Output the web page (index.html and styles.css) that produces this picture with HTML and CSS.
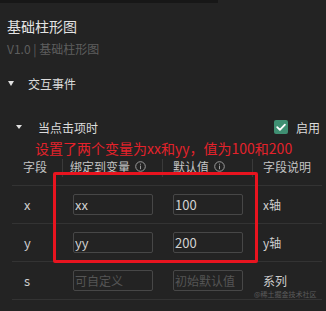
FILE: index.html
```html
<!DOCTYPE html>
<html>
<head>
<meta charset="utf-8">
<link rel="stylesheet" href="styles.css">
</head>
<body>
<div class="topbar"></div>
<div class="panel">
  <div class="title">基础柱形图</div>
  <div class="version">V1.0 | 基础柱形图</div>
  <div class="section"><span class="caret"></span><span class="section-label">交互事件</span></div>
  <div class="event-row">
    <span class="caret caret-sm"></span>
    <span class="event-label">当点击项时</span>
    <span class="spacer"></span>
    <span class="checkbox"><svg width="14" height="14" viewBox="0 0 14 14"><path d="M3.2 7.2 L5.9 9.8 L10.9 4.6" fill="none" stroke="#fff" stroke-width="1.8" stroke-linecap="round" stroke-linejoin="round"/></svg></span>
    <span class="enable">启用</span>
  </div>
  <div class="table">
    <div class="th th-first"><span class="th-text">字段</span></div>
    <div class="th th-div th-var"><span class="th-text">绑定到变量</span><svg class="info" width="11" height="11" viewBox="0 0 11 11"><circle cx="5.5" cy="5.5" r="4.8" fill="none" stroke="#9a9a9a" stroke-width="1"/><rect x="5" y="4.6" width="1" height="3.6" fill="#9a9a9a"/><rect x="5" y="2.7" width="1" height="1" fill="#9a9a9a"/></svg></div>
    <div class="th th-div"><span class="th-text">默认值</span><svg class="info" width="11" height="11" viewBox="0 0 11 11"><circle cx="5.5" cy="5.5" r="4.8" fill="none" stroke="#9a9a9a" stroke-width="1"/><rect x="5" y="4.6" width="1" height="3.6" fill="#9a9a9a"/><rect x="5" y="2.7" width="1" height="1" fill="#9a9a9a"/></svg></div>
    <div class="th th-div"><span class="th-text">字段说明</span></div>

    <div class="td td-first">x</div>
    <div class="td"><input class="inp inp-var" value="xx"></div>
    <div class="td"><input class="inp inp-def" value="100"></div>
    <div class="td">x轴</div>

    <div class="td td-first">y</div>
    <div class="td"><input class="inp inp-var" value="yy"></div>
    <div class="td"><input class="inp inp-def" value="200"></div>
    <div class="td">y轴</div>

    <div class="td td-first">s</div>
    <div class="td"><input class="inp inp-var" placeholder="可自定义"></div>
    <div class="td"><input class="inp inp-def" placeholder="初始默认值"></div>
    <div class="td">系列</div>
  </div>
  <div class="note">设置了两个变量为xx和yy，值为100和200</div>
  <div class="redbox"></div>
  <div class="watermark">@稀土掘金技术社区</div>
</div>
</body>
</html>
```

FILE: styles.css
```css
* { box-sizing: border-box; }
html, body {
  margin: 0;
  padding: 0;
  background: #232323;
  width: 326px;
  height: 311px;
  overflow: hidden;
  font-family: "Noto Sans CJK SC", "Noto Sans", sans-serif;
  color: #d6d6d6;
}
.topbar {
  width: 218px;
  height: 3px;
  background: #171717;
}
.panel {
  position: relative;
  padding: 13px 4px 0 0;
}
.title {
  margin-left: 7px;
  font-size: 14px;
  line-height: 20px;
  color: #e4e4e4;
}
.version {
  margin: 4px 0 0 7px;
  font-size: 12px;
  line-height: 18px;
  color: #5e5e5e;
}
.section {
  margin: 16px 0 0 8px;
  display: flex;
  align-items: center;
  height: 18px;
  font-size: 12px;
  color: #dcdcdc;
}
.caret {
  width: 0;
  height: 0;
  border-left: 3.5px solid transparent;
  border-right: 3.5px solid transparent;
  border-top: 5px solid #e0e0e0;
}
.section-label { margin-left: 14px; }
.event-row {
  margin: 26px 0 0 16px;
  display: flex;
  align-items: center;
  height: 18px;
  font-size: 12px;
  color: #dcdcdc;
}
.caret-sm {
  border-left-width: 3px;
  border-right-width: 3px;
  border-top-width: 4.5px;
}
.event-label { margin-left: 16px; }
.spacer { flex: 1; }
.checkbox {
  width: 14px;
  height: 14px;
  border-radius: 2px;
  background: #3f8f72;
  display: flex;
}
.enable { margin-left: 8px; margin-right: 2px; }
.table {
  margin: 12px 0 0 12px;
  display: grid;
  grid-template-columns: 50px 100px 90px 1fr;
}
.th, .td {
  height: 38px;
  display: flex;
  align-items: center;
  padding-left: 11px;
  border-bottom: 1px solid #333333;
  font-size: 12px;
}
.th {
  position: relative;
  color: #c4c4c4;
}
.th-text { line-height: 14px; }
.th-first { padding-left: 11px; }
.th-var { padding-left: 8px; }
.th-div::before {
  content: "";
  position: absolute;
  left: 0;
  top: 11px;
  width: 1px;
  height: 18px;
  background: #3a3a3a;
}
.info { margin-left: 5px; }
.td {
  color: #cfcfcf;
  font-size: 12px;
}
.td-first {
  padding-left: 12px;
  font-size: 13px;
}
.inp {
  height: 21px;
  background: transparent;
  border: 1px solid #474747;
  border-radius: 2px;
  padding: 0 1px;
  color: #d2d2d2;
  font-family: "Noto Sans CJK SC", "Noto Sans", sans-serif;
  font-size: 13px;
  outline: none;
}
.inp::placeholder {
  color: #555555;
  font-size: 12px;
}
.inp-var { width: 80px; }
.inp-def { width: 70px; }
.note {
  position: absolute;
  left: 35px;
  top: 137px;
  font-size: 14px;
  line-height: 16px;
  color: #e4222b;
  white-space: nowrap;
}
.redbox {
  position: absolute;
  left: 53px;
  top: 169px;
  width: 205px;
  height: 91px;
  border: 3.5px solid #e8141f;
  border-radius: 2px;
}
.watermark {
  position: absolute;
  left: 254px;
  top: 286px;
  font-size: 7px;
  line-height: 10px;
  color: #5c5c5c;
  white-space: nowrap;
}
```
